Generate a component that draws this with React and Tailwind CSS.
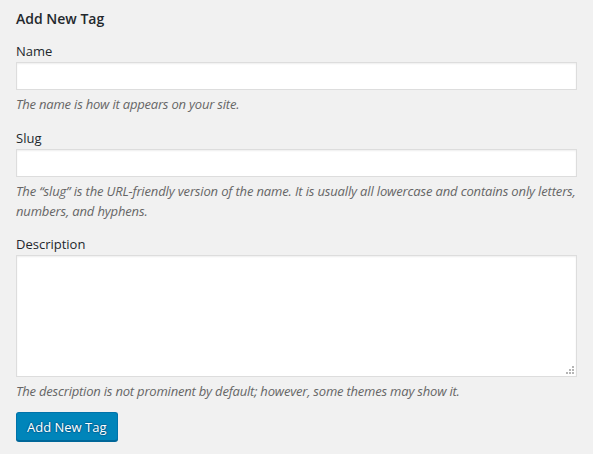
export default function App() {
  const font = { fontFamily: '"Open Sans", "Noto Sans", sans-serif' }
  return (
    <div className="min-h-screen bg-[#f1f1f1] px-4 pt-[9px] text-[#23282d]" style={font}>
      <h2 className="text-[14px] leading-5 font-semibold mb-[12px]">Add New Tag</h2>

      <div className="mb-[14px]">
        <label className="block text-[13px] leading-5 mb-[1px]">Name</label>
        <input type="text" className="block w-[561px] h-[28px] bg-white border border-[#ddd] shadow-[inset_0_1px_2px_rgba(0,0,0,0.07)] outline-none" />
        <p className="mt-[4px] text-[13px] leading-5 italic text-[#666] tracking-[-0.2px]">The name is how it appears on your site.</p>
      </div>

      <div className="mb-[13px]">
        <label className="block text-[13px] leading-5 mb-[1px]">Slug</label>
        <input type="text" className="block w-[561px] h-[28px] bg-white border border-[#ddd] shadow-[inset_0_1px_2px_rgba(0,0,0,0.07)] outline-none" />
        <p className="mt-[4px] text-[13px] leading-5 italic text-[#666] tracking-[-0.15px] whitespace-nowrap">
          The “slug” is the URL-friendly version of the name. It is usually all lowercase and contains only letters,<br />
          numbers, and hyphens.
        </p>
      </div>

      <div className="mb-[11px]">
        <label className="block text-[13px] leading-5 mb-[1px]">Description</label>
        <div className="relative w-[561px]">
          <textarea className="block w-[561px] h-[122px] bg-white border border-[#ddd] shadow-[inset_0_1px_2px_rgba(0,0,0,0.07)] outline-none resize-none" />
          {/* resize grip */}
          <svg className="absolute right-[3px] bottom-[3px]" width="8" height="8" viewBox="0 0 8 8">
            <rect x="6" y="0" width="2" height="2" fill="#b5b5b5" />
            <rect x="3" y="3" width="2" height="2" fill="#b5b5b5" />
            <rect x="6" y="3" width="2" height="2" fill="#b5b5b5" />
            <rect x="0" y="6" width="2" height="2" fill="#b5b5b5" />
            <rect x="3" y="6" width="2" height="2" fill="#b5b5b5" />
            <rect x="6" y="6" width="2" height="2" fill="#b5b5b5" />
          </svg>
        </div>
        <p className="mt-[4px] text-[13px] leading-5 italic text-[#666] tracking-[-0.2px]">The description is not prominent by default; however, some themes may show it.</p>
      </div>

      <button className="h-[29px] px-[10px] rounded-[3px] bg-[#0085ba] border border-[#0073aa] border-b-[#006799] shadow-[0_1px_0_#006799] text-white text-[13px] leading-[26px] [text-shadow:0_-1px_1px_#006799,1px_0_1px_#006799,0_1px_1px_#006799,-1px_0_1px_#006799]">
        Add New Tag
      </button>
    </div>
  )
}
